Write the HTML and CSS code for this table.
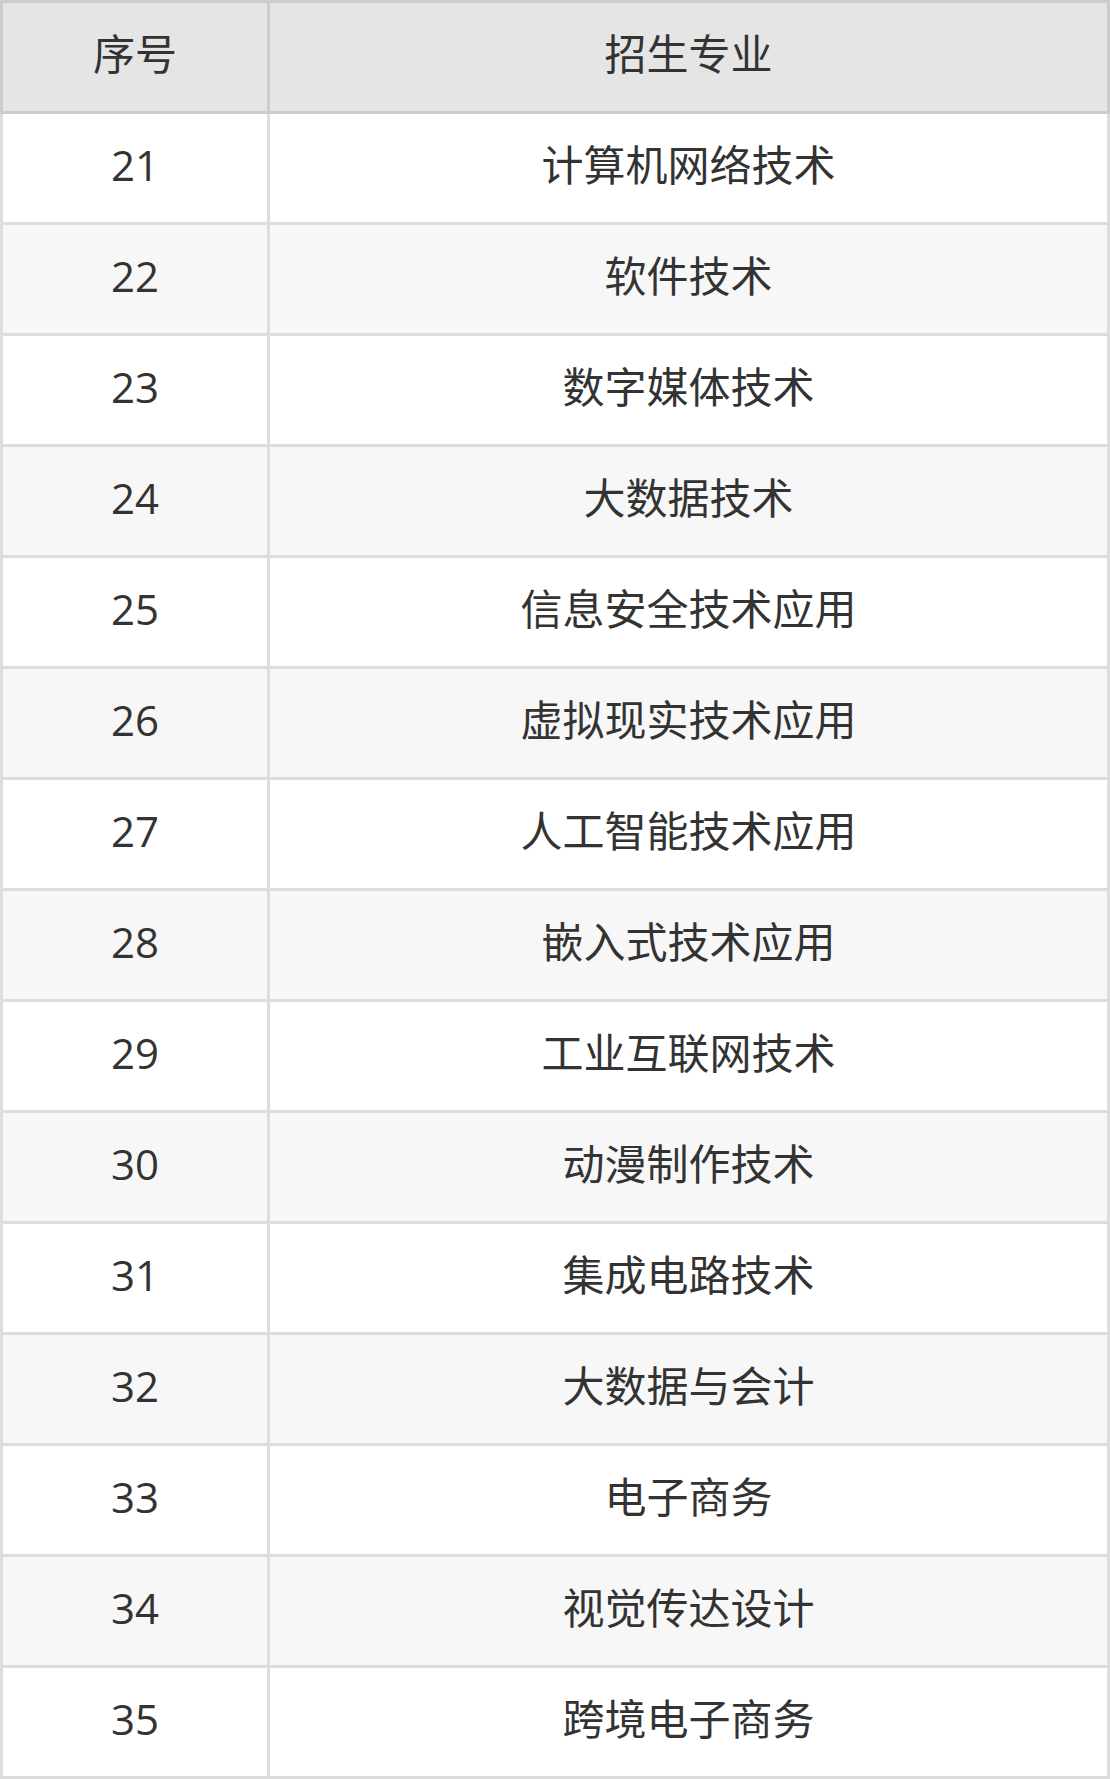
FILE: index.html
```html
<!DOCTYPE html>
<html lang="zh-CN">
<head>
<meta charset="utf-8">
<title>招生专业</title>
<link rel="stylesheet" href="styles.css">
</head>
<body>
<table class="major-table">
  <colgroup>
    <col class="col-no">
    <col class="col-name">
  </colgroup>
  <thead>
    <tr><th>序号</th><th>招生专业</th></tr>
  </thead>
  <tbody>
    <tr><td>21</td><td>计算机网络技术</td></tr>
    <tr><td>22</td><td>软件技术</td></tr>
    <tr><td>23</td><td>数字媒体技术</td></tr>
    <tr><td>24</td><td>大数据技术</td></tr>
    <tr><td>25</td><td>信息安全技术应用</td></tr>
    <tr><td>26</td><td>虚拟现实技术应用</td></tr>
    <tr><td>27</td><td>人工智能技术应用</td></tr>
    <tr><td>28</td><td>嵌入式技术应用</td></tr>
    <tr><td>29</td><td>工业互联网技术</td></tr>
    <tr><td>30</td><td>动漫制作技术</td></tr>
    <tr><td>31</td><td>集成电路技术</td></tr>
    <tr><td>32</td><td>大数据与会计</td></tr>
    <tr><td>33</td><td>电子商务</td></tr>
    <tr><td>34</td><td>视觉传达设计</td></tr>
    <tr><td>35</td><td>跨境电子商务</td></tr>
  </tbody>
</table>
</body>
</html>
```
FILE: styles.css
```css
html, body {
  margin: 0;
  padding: 0;
  background: #ffffff;
}

.major-table {
  width: 1110px;
  border-collapse: collapse;
  table-layout: fixed;
  font-family: "Open Sans", "Noto Sans CJK SC", sans-serif;
  font-size: 42px;
  color: #333333;
}

.col-no {
  width: 267px;
}

.major-table th,
.major-table td {
  height: 102px;
  padding: 0 0 6px 0;
  text-align: center;
  vertical-align: middle;
  line-height: 1.2;
}

.major-table th {
  font-weight: normal;
  background: #e5e5e5;
  border: 3px solid #cccccc;
}

.major-table td {
  border: 3px solid #dddddd;
}

.major-table tbody tr:nth-child(even) td {
  background: #f7f7f7;
}
```
